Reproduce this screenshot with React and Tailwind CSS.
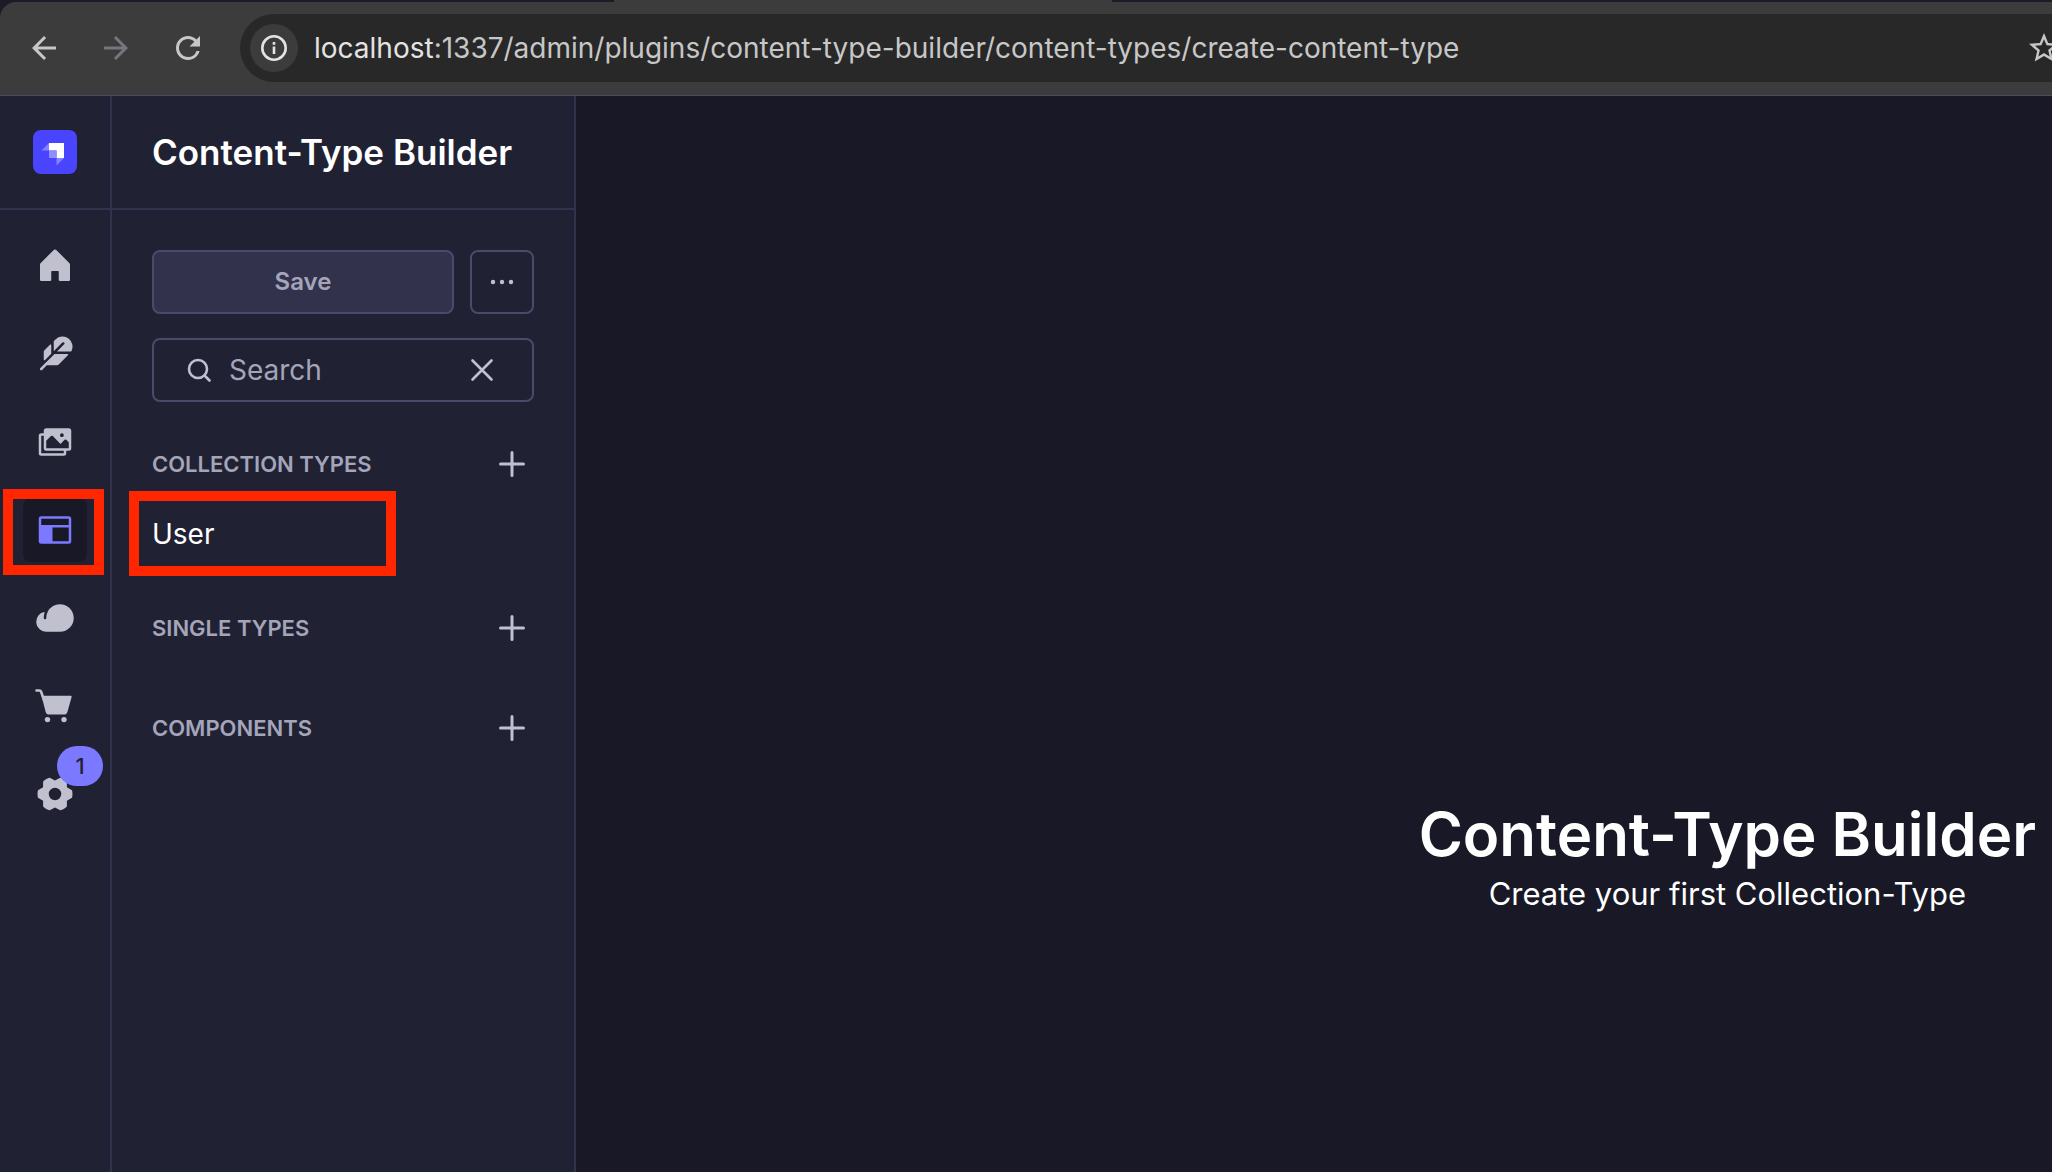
import React from 'react';
import {
    PiHouseFill,
    PiFeatherFill,
    PiImagesFill,
    PiCloudFill,
    PiGearSixFill,
} from 'react-icons/pi';
import { MdArrowBack, MdArrowForward, MdRefresh, MdStarBorder } from 'react-icons/md';

const LogoIcon = () => (
    <svg viewBox="0 0 44 44" className="size-11" aria-hidden="true">
        <rect width="44" height="44" rx="8" fill="#4945ff" />
        <path d="M16 13h15v15h-7.5v-7.5H16z" fill="#fff" />
        <path d="M16 13v7.5H8.5z" fill="#8381ff" />
        <path d="M16 20.5h7.5V28H17a1 1 0 0 1-1-1z" fill="#8f8dff" />
        <path d="M23.5 28H31l-7.5 7.5z" fill="#8381ff" />
    </svg>
);

const LayoutIcon = () => (
    <svg viewBox="0 0 32 32" className="size-10" fill="currentColor" aria-hidden="true">
        <path
            fillRule="evenodd"
            d="M5 5h22a2 2 0 0 1 2 2v18a2 2 0 0 1-2 2H5a2 2 0 0 1-2-2V7a2 2 0 0 1 2-2zm0 2v5h22V7zm9 7v11h13V14z"
        />
    </svg>
);

const CartIcon = () => (
    <svg viewBox="0 0 40 40" className="size-10" fill="currentColor" aria-hidden="true">
        <path d="M1.5 4.5h2.7a2 2 0 0 1 2 1.5L9 14" fill="none" stroke="currentColor" strokeWidth="2.6" strokeLinecap="round" />
        <path d="M6.5 9.8h29.1a1 1 0 0 1 1 1.3l-4.1 14.6a4 4 0 0 1-3.8 2.9H14.4a4 4 0 0 1-3.8-2.9z" />
        <circle cx="12.5" cy="33.6" r="2.7" />
        <circle cx="29" cy="33.6" r="2.7" />
    </svg>
);

const PlusIcon = () => (
    <svg viewBox="0 0 26 26" className="size-[26px]" fill="none" stroke="currentColor" strokeWidth="3" strokeLinecap="round" aria-hidden="true">
        <path d="M13 1.5v23M1.5 13h23" />
    </svg>
);

const navItems = [
    { label: 'Home', icon: <PiHouseFill className="size-10" /> },
    { label: 'Content Manager', icon: <PiFeatherFill className="size-10" /> },
    { label: 'Media Library', icon: <PiImagesFill className="size-10" /> },
    { label: 'Content-Type Builder', icon: <LayoutIcon />, active: true },
    { label: 'Deploy', icon: <PiCloudFill className="size-10" /> },
    { label: 'Marketplace', icon: <CartIcon /> },
    { label: 'Settings', icon: <PiGearSixFill className="size-10" />, badge: 1 },
];

const BrowserBar = () => (
    <header className="relative bg-[#1c1b29] pt-[2px]">
        <div className="absolute left-[614px] top-0 h-[2px] w-[498px] bg-[#3c3c3c]" />
        <div className="flex h-[94px] items-center overflow-hidden rounded-tl-2xl border-b border-[#4d4c5c] bg-[#3c3c3c] pb-px pl-[26px] text-[#c7c7c7]">
            <button type="button" aria-label="Back"><MdArrowBack className="size-9" /></button>
            <button type="button" aria-label="Forward" className="ml-9 text-[#77757f]"><MdArrowForward className="size-9" /></button>
            <button type="button" aria-label="Reload" className="ml-9"><MdRefresh className="size-9" /></button>
            <div className="ml-[34px] flex h-[68px] flex-1 items-center rounded-l-full bg-[#282828] pl-[10px]">
                <button type="button" aria-label="Site information" className="flex size-12 shrink-0 items-center justify-center rounded-full bg-[#3c3c3c] text-[#e3e3e3]">
                    <svg viewBox="0 0 26 26" className="size-[26px]" aria-hidden="true">
                        <circle cx="13" cy="13" r="11.7" fill="none" stroke="currentColor" strokeWidth="2.6" />
                        <path d="M11.7 11.5h2.6V19h-2.6zM11.7 7h2.6v2.7h-2.6z" fill="currentColor" />
                    </svg>
                </button>
                <p className="ml-4 flex-1 whitespace-nowrap text-[28px] leading-9">
                    <span className="text-[#e3e3e3]">localhost</span>:1337/admin/plugins/content-type-builder/content-types/create-content-type
                </p>
                <button type="button" aria-label="Bookmark" className="-mr-[10px] shrink-0"><MdStarBorder className="size-9" /></button>
            </div>
        </div>
    </header>
);

const NavRail = () => (
    <aside className="w-28 shrink-0 border-r-2 border-[#32324d]">
        <div className="flex h-[114px] items-center justify-center border-b-2 border-[#32324d]">
            <LogoIcon />
        </div>
        <nav className="flex flex-col items-center gap-6 pt-6">
            {navItems.map(item => (
                <a
                    key={item.label}
                    href="#"
                    aria-label={item.label}
                    className={item.active
                        ? 'relative flex size-16 items-center justify-center rounded-lg bg-[#181826] text-[#7b79ff]'
                        : 'relative flex size-16 items-center justify-center text-[#c0c0cf]'}
                >
                    {item.icon}
                    {item.active && <span className="absolute -left-5 -top-[9px] h-[86px] w-[101px] border-10 border-[#ff2600]" />}
                    {item.badge && (
                        <span className="absolute -right-4 -top-4 flex h-10 w-[46px] items-center justify-center rounded-full bg-[#7b79ff] text-[22px] font-medium text-[#212134]">
                            {item.badge}
                        </span>
                    )}
                </a>
            ))}
        </nav>
    </aside>
);

const SectionTitle = ({ title }) => (
    <div className="flex h-8 items-center justify-between pr-[9px]">
        <h3 className="text-[22px] font-semibold uppercase leading-[30px] text-[#a5a5ba]">{title}</h3>
        <button type="button" aria-label={`Create ${title}`} className="text-[#c0c0cf]"><PlusIcon /></button>
    </div>
);

const SidePanel = () => (
    <aside className="w-[464px] shrink-0 border-r-2 border-[#32324d]">
        <div className="flex h-[114px] items-center border-b-2 border-[#32324d] px-10">
            <h2 className="text-[35px] font-semibold leading-[44px] text-white">Content-Type Builder</h2>
        </div>
        <div className="p-10">
            <div className="flex gap-4">
                <button type="button" className="h-16 flex-1 rounded-lg border-2 border-[#4a4a6a] bg-[#32324d] text-[24px] font-semibold text-[#a5a5ba]">Save</button>
                <button type="button" aria-label="More actions" className="flex size-16 items-center justify-center rounded-lg border-2 border-[#4a4a6a] text-[#c0c0cf]">
                    <svg viewBox="0 0 24 24" className="size-6" fill="currentColor" aria-hidden="true">
                        <circle cx="3" cy="12" r="2.2" />
                        <circle cx="12" cy="12" r="2.2" />
                        <circle cx="21" cy="12" r="2.2" />
                    </svg>
                </button>
            </div>
            <div className="mt-6 flex h-16 items-center rounded-lg border-2 border-[#4a4a6a] pl-[33px] pr-[38px] text-[#c0c0cf]">
                <svg viewBox="0 0 24 24" className="size-6 shrink-0" fill="none" stroke="currentColor" strokeWidth="2.6" strokeLinecap="round" aria-hidden="true">
                    <circle cx="11" cy="11" r="9" />
                    <path d="M17.5 17.5l5 5" />
                </svg>
                <input
                    type="text"
                    aria-label="Search"
                    placeholder="Search"
                    className="ml-[18px] min-w-0 flex-1 bg-transparent text-[28px] leading-9 text-white outline-none placeholder:text-[#a5a5ba]"
                />
                <button type="button" aria-label="Clear">
                    <svg viewBox="0 0 24 24" className="size-6" fill="none" stroke="currentColor" strokeWidth="2.6" strokeLinecap="round" aria-hidden="true">
                        <path d="M2.5 2.5l19 19M21.5 2.5l-19 19" />
                    </svg>
                </button>
            </div>
            <div className="mt-[46px]">
                <SectionTitle title="Collection Types" />
                <ul className="mt-[11px]">
                    <li className="relative flex h-[86px] items-center">
                        <a href="#" className="text-[28px] leading-9 text-white">User</a>
                        <span className="absolute -left-[23px] top-0 h-[85px] w-[267px] border-10 border-[#ff2600]" />
                    </li>
                </ul>
            </div>
            <div className="mt-[35px]">
                <SectionTitle title="Single Types" />
            </div>
            <div className="mt-[68px]">
                <SectionTitle title="Components" />
            </div>
        </div>
    </aside>
);

const App = () => (
    <div className="flex min-h-screen flex-col overflow-hidden bg-[#212134] font-['Inter',sans-serif]">
        <BrowserBar />
        <div className="flex flex-1">
            <NavRail />
            <SidePanel />
            <main className="flex flex-1 flex-col items-end bg-[#181826] pr-4 pt-[698px] text-white">
                <div className="text-center">
                    <h1 className="text-[60px] font-semibold leading-[80px]">Content-Type Builder</h1>
                    <p className="text-[31px] leading-[40px]">Create your first Collection-Type</p>
                </div>
            </main>
        </div>
    </div>
);

export default App;
